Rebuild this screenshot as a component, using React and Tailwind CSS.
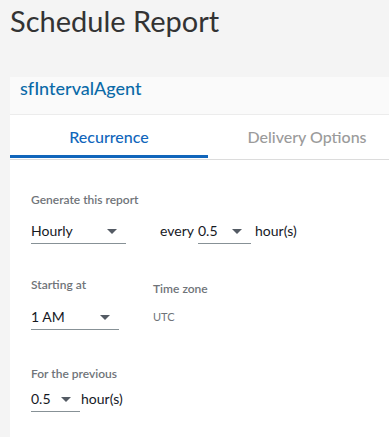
import React from "react";

const Caret = () => (
  <svg width="10" height="5" viewBox="0 0 10 5" className="shrink-0">
    <path d="M0 0 L10 0 L5 5 Z" fill="#545b64" />
  </svg>
);

function Select({ value, w }) {
  return (
    <div className={`flex items-center justify-between border-b border-[#879196] pb-[2px] pr-[9px] ${w}`}>
      <span className="text-[14px] leading-[20px] text-[#16191f]">{value}</span>
      <Caret />
    </div>
  );
}

export default function App() {
  return (
    <div
      className="w-[389px] h-[437px] overflow-hidden bg-[#f4f4f4]"
      style={{ fontFamily: "Lato, 'Open Sans', sans-serif" }}
    >
      <h1 className="pl-[10px] pt-[5px] text-[29px] leading-[32px] text-[#333333] font-normal">
        Schedule Report
      </h1>
      <div className="ml-[10px] mt-[40px] w-[400px]">
        <div className="h-[37px] bg-[#fafafa] pl-[10px]">
          <span className="text-[18px] leading-[22px] text-[#0a6aa8] font-medium">sfIntervalAgent</span>
        </div>
        <div className="bg-white border-t border-[#ececec] h-[330px]">
          <div className="flex">
            <div className="w-[198px] flex flex-col items-center">
              <div className="pt-[12px] pb-[8px] text-[16px] leading-[20px] text-[#1166bb] font-medium">
                Recurrence
              </div>
              <div className="h-[3px] w-full bg-[#1166bb]" />
            </div>
            <div className="w-[198px] flex flex-col items-center">
              <div className="pt-[12px] pb-[8px] text-[16px] leading-[20px] text-[#9b9b9b] font-medium">
                Delivery Options
              </div>
            </div>
          </div>
          <div className="mt-[1px] h-[1px] bg-[#dcdcdc]" />

          <div className="pl-[21px] pt-[32px]">
            <div className="text-[12px] leading-[16px] font-semibold text-[#6f7479]">Generate this report</div>
            <div className="mt-[13px] flex items-start">
              <Select value="Hourly" w="w-[95px]" />
              <span className="ml-[34px] w-[38px] text-[14px] leading-[20px] text-[#16191f]">every</span>
              <Select value="0.5" w="w-[53px]" />
              <span className="ml-[4px] text-[14px] leading-[20px] text-[#16191f]">hour(s)</span>
            </div>

            <div className="mt-[33px] flex items-start">
              <div className="w-[122px]">
                <div className="text-[12px] leading-[16px] font-semibold text-[#6f7479]">Starting at</div>
                <div className="mt-[14px]">
                  <Select value="1 AM" w="w-[88px]" />
                </div>
              </div>
              <div className="pt-[4px]">
                <div className="text-[12px] leading-[16px] font-semibold text-[#6f7479]">Time zone</div>
                <div className="mt-[12px] text-[11px] leading-[16px] text-[#6f7479]">UTC</div>
              </div>
            </div>

            <div className="mt-[36px]">
              <div className="text-[12px] leading-[16px] font-semibold text-[#6f7479]">For the previous</div>
              <div className="mt-[7px] flex items-start">
                <Select value="0.5" w="w-[49px]" />
                <span className="ml-[1px] text-[14px] leading-[20px] text-[#16191f]">hour(s)</span>
              </div>
            </div>
          </div>
        </div>
      </div>
    </div>
  );
}
